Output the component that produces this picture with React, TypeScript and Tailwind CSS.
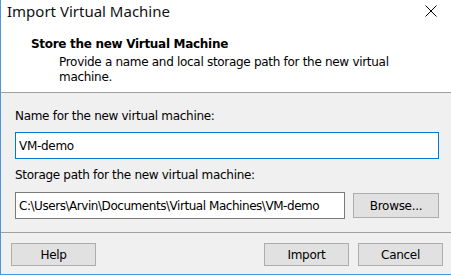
const ui = "font-['DejaVu_Sans',sans-serif] text-[12px] tracking-[-0.3px] text-black";

function Btn({ label, size = "w-[85px] h-[23px]" }: { label: string; size?: string }) {
  return (
    <button className={`${ui} ${size} border border-[#adadad] bg-[#e1e1e1]`}>
      {label}
    </button>
  );
}

export default function App() {
  return (
    <div className="flex h-[275px] w-[451px] flex-col border-b border-l border-[#4d95dc] bg-[#f0f0f0]">
      {/* header */}
      <div className="h-[93px] border-b border-[#a0a0a0] bg-white">
        <div className="flex h-[22px] items-center justify-between pl-[6px] pr-[14px]">
          <span className="font-['Noto_Sans',sans-serif] text-[15px] leading-[22px] text-[#111]">
            Import Virtual Machine
          </span>
          <svg width="12" height="12" viewBox="0 0 12 12" className="mb-[1px]">
            <path d="M0.5 0.5 L11.5 11.5 M11.5 0.5 L0.5 11.5" stroke="#000" strokeWidth="1" />
          </svg>
        </div>
        <div className="mt-[14px] pl-[30px]">
          <div className={`${ui} font-bold leading-[17px]`}>Store the new Virtual Machine</div>
          <p className={`${ui} mt-[2px] w-[372px] pl-[28px] leading-[15px]`}>
            Provide a name and local storage path for the new virtual machine.
          </p>
        </div>
      </div>

      {/* body */}
      <div className="h-[140px] border-b border-[#a0a0a0] pl-[14px] pt-[15px]">
        <div className={`${ui} leading-[17px]`}>Name for the new virtual machine:</div>
        <div className={`${ui} mt-[7px] flex h-[27px] w-[424px] items-center border border-[#0078d7] bg-white pl-[3px]`}>
          VM-demo
        </div>
        <div className={`${ui} mt-[8px] leading-[17px]`}>Storage path for the new virtual machine:</div>
        <div className="mt-[8px] flex items-center gap-[8px]">
          <div className={`${ui} flex h-[27px] w-[330px] items-center whitespace-nowrap border border-[#7a7a7a] bg-white pl-[3px] tracking-[-0.45px]`}>
            C:\Users\Arvin\Documents\Virtual Machines\VM-demo
          </div>
          <Btn label="Browse..." size="w-[86px] h-[25px]" />
        </div>
      </div>

      {/* footer */}
      <div className="flex flex-1 items-start justify-between pl-[10px] pr-[8px] pt-[10px]">
        <Btn label="Help" />
        <div className="flex gap-[9px]">
          <Btn label="Import" />
          <Btn label="Cancel" />
        </div>
      </div>
    </div>
  );
}
